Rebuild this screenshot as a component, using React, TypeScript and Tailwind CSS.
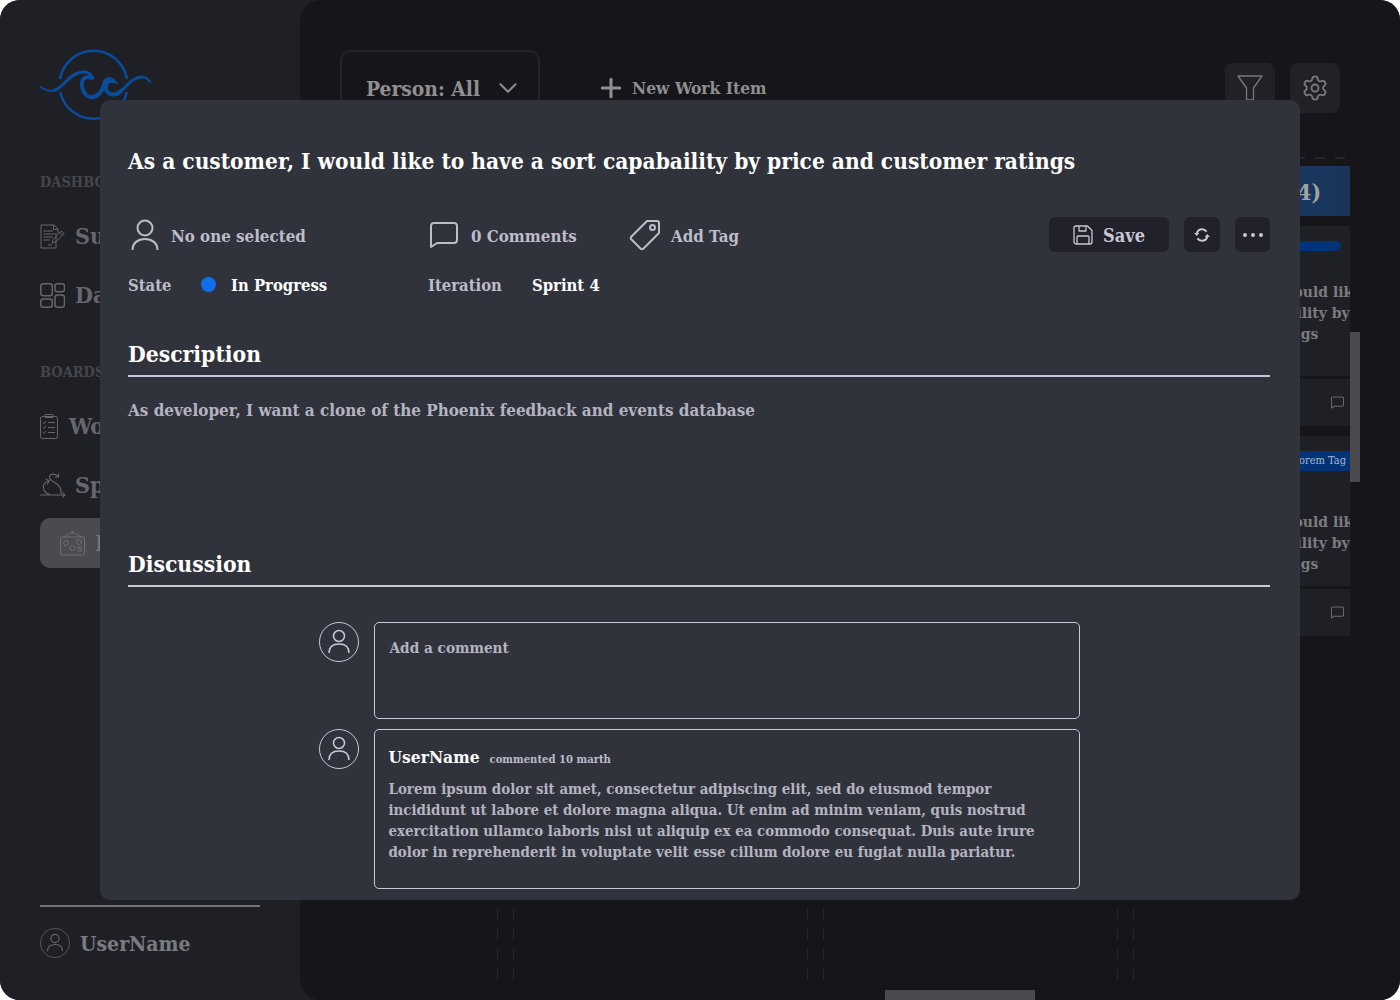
import { ChevronDown, Plus, Settings } from "lucide-react";

const dashV =
  "w-px h-full bg-[repeating-linear-gradient(to_bottom,#26272c_0_3px,transparent_3px_12px,#26272c_12px_20px)]";

function Logo() {
  return (
    <svg width="110" height="70" viewBox="0 0 110 70" fill="none" stroke="#0a4c9c" strokeLinecap="round" className="overflow-visible">
      <path d="M20.2 28 A34 34 0 0 1 86.8 28" strokeWidth="2.5" />
      <path d="M20.5 43 A34 34 0 0 0 86.5 43" strokeWidth="2.5" />
      <path d="M1 37 C5 40 10 42 15 40" strokeWidth="2" />
      <path d="M15 40 C24 37 30 22 44 22 C48 22 51 24 52 28" strokeWidth="3" />
      <path
        d="M52 28 C46 25 41 29 42 36 C43 44 48 48 53 47 C59 46 62 41 64 35 C65 30 69 27 73 31 C67 30 65 35 66 39 C68 46 76 46 81 41"
        strokeWidth="4"
      />
      <path d="M81 41 C87 36 93 27 102 27" strokeWidth="3" />
      <path d="M102 27 C105 27 108 29 110 32" strokeWidth="2" />
    </svg>
  );
}

function PersonIcon({ className }: { className?: string }) {
  return (
    <svg className={className} viewBox="0 0 28 32" fill="none" stroke="currentColor" strokeWidth="2">
      <circle cx="14" cy="9" r="7.5" />
      <path d="M1.5 31 C1.5 24 7 20 14 20 C21 20 26.5 24 26.5 31" />
    </svg>
  );
}

function Avatar({ className }: { className?: string }) {
  return (
    <svg className={className} viewBox="0 0 40 40" fill="none" stroke="currentColor" strokeWidth="1">
      <circle cx="20" cy="20" r="19.5" />
      <circle cx="20" cy="14" r="5.5" strokeWidth="1.5" />
      <path d="M10 31 C10 25 14 22 20 22 C26 22 30 25 30 31" strokeWidth="1.5" />
    </svg>
  );
}

function CommentIcon({ className, width = 2 }: { className?: string; width?: number }) {
  return (
    <svg className={className} viewBox="0 0 28 26" fill="none" stroke="currentColor" strokeWidth={width}>
      <path d="M4 1 H24 A3 3 0 0 1 27 4 V18 A3 3 0 0 1 24 21 H7 L1 25 V4 A3 3 0 0 1 4 1 Z" strokeLinejoin="round" />
    </svg>
  );
}

function TagIcon() {
  return (
    <svg width="32" height="32" viewBox="0 0 32 32" fill="none" stroke="currentColor" strokeWidth="2" strokeLinejoin="round">
      <path d="M18 2 H28 A2 2 0 0 1 30 4 V14 L14 30 A2 2 0 0 1 12 30 L2 20 A2 2 0 0 1 2 18 Z" />
      <circle cx="23.5" cy="8.5" r="2.5" />
    </svg>
  );
}

function SaveIcon() {
  return (
    <svg width="20" height="20" viewBox="0 0 20 20" fill="none" stroke="currentColor" strokeWidth="1.3" strokeLinejoin="round">
      <path d="M3 1 H14.5 L19 5.5 V17 A2 2 0 0 1 17 19 H3 A2 2 0 0 1 1 17 V3 A2 2 0 0 1 3 1 Z" />
      <path d="M6 1 V6 H13 V1" />
      <path d="M4 19 V12 A1 1 0 0 1 5 11 H15 A1 1 0 0 1 16 12 V19" />
    </svg>
  );
}

function SyncIcon() {
  return (
    <svg width="16" height="14" viewBox="0 0 16 14" fill="none" stroke="currentColor" strokeWidth="2">
      <path d="M2.7 6 C3.2 3 5.2 1.2 8 1.2 C10 1.2 11.6 2.2 12.6 3.6" />
      <path d="M13.3 8 C12.8 11 10.8 12.8 8 12.8 C6 12.8 4.4 11.8 3.4 10.4" />
      <path d="M0.2 5 L2.7 8 L5.2 5 Z" fill="currentColor" stroke="none" />
      <path d="M15.8 9 L13.3 6 L10.8 9 Z" fill="currentColor" stroke="none" />
    </svg>
  );
}

function DocIcon() {
  return (
    <svg width="25" height="25" viewBox="0 0 25 25" fill="none" stroke="currentColor" strokeWidth="1">
      <path d="M16 9 V24 H1 V1 H14 L18 5 V9" strokeLinejoin="round" />
      <path d="M13.5 1 V5.5 H18" />
      <path d="M3.5 7 H13 M3.5 10 H15 M3.5 13 H13 M3.5 16 H10 M8 21 H12" strokeWidth="1.2" />
      <path d="M12 19 L13 15.5 L21.5 7 L24 9.5 L15.5 18 Z" strokeLinejoin="round" />
      <path d="M20 8.5 L22.5 11" />
    </svg>
  );
}

function GridIcon() {
  return (
    <svg width="25" height="25" viewBox="0 0 25 25" fill="none" stroke="currentColor" strokeWidth="1.5">
      <rect x="0.8" y="0.8" width="11.5" height="12" rx="2.5" />
      <rect x="15" y="0.8" width="9.5" height="8" rx="2.5" />
      <rect x="0.8" y="16" width="11.5" height="8.2" rx="2.5" />
      <rect x="15" y="12" width="9.5" height="12.2" rx="2.5" />
    </svg>
  );
}

function ClipboardIcon() {
  return (
    <svg width="18" height="25" viewBox="0 0 18 25" fill="none" stroke="currentColor" strokeWidth="1">
      <rect x="0.5" y="2.5" width="17" height="22" rx="2" />
      <rect x="4.5" y="0.5" width="9" height="3" rx="1" />
      <path d="M3 8.5 L4 9.5 L6 7 M3 13.5 L4 14.5 L6 12 M3 18.5 L4 19.5 L6 17" />
      <path d="M8 8.5 H15 M8 13.5 H15 M8 18.5 H15" strokeWidth="1.2" />
    </svg>
  );
}

function SprintIcon() {
  return (
    <svg width="25" height="25" viewBox="0 0 25 25" fill="none" stroke="currentColor" strokeWidth="1.1" className="overflow-visible">
      <path d="M0 22 H25 M22.7 19.7 L25 22 L22.7 24.3" />
      <path d="M18 3.5 C16 0.5 10 0 9.5 4 C9 7.5 14 8.5 17 11 C20 13.5 21.5 17 21 21" />
      <path d="M9 8 C5 9 2 12 3.5 16 C4.5 19 7 21 10 21.5" />
      <path d="M18.5 0.5 V4 H15" />
      <path d="M5.5 6 L9.3 8 L7 11.5" />
    </svg>
  );
}

function RemoteIcon() {
  return (
    <svg width="25" height="25" viewBox="0 0 25 25" fill="none" stroke="currentColor" strokeWidth="0.8">
      <rect x="0.5" y="6" width="24" height="18" rx="2" />
      <path d="M4 6 L12.5 1 L21 6" />
      <circle cx="12.5" cy="1.5" r="1" />
      <circle cx="6" cy="12" r="2.5" />
      <circle cx="19" cy="11" r="2.5" />
      <circle cx="12.5" cy="17" r="2.5" />
      <path d="M17 16 H22 M17 18 H22 M17 20 H22" />
    </svg>
  );
}

function ColumnGap() {
  return (
    <div className="flex h-full w-[17px] shrink-0 justify-between">
      <div className={dashV} />
      <div className={dashV} />
    </div>
  );
}

function TaskCard({ withTag }: { withTag?: boolean }) {
  return (
    <div className="w-full shrink-0 overflow-hidden bg-[#1f2025]">
      <div className="h-[150px] pt-[15px]">
        {withTag ? (
          <div className="flex h-5 justify-end">
            <span className="flex w-[110px] items-center justify-end bg-[#003378] pt-px pr-1 text-[11px] whitespace-nowrap text-[#aab6ca]">
              Lorem Tag
            </span>
          </div>
        ) : (
          <div className="mx-[9px] h-2.5 rounded-full bg-[#003378]" />
        )}
        <div
          className={`text-[15.5px] leading-[21px] font-bold whitespace-nowrap text-[#7b7b80] ${withTag ? "mt-[40px]" : "mt-[30px]"}`}
        >
          <div className="ml-[17px]">As a customer, I would like</div>
          <div className="-ml-[4px]">to have a sort capabaility by</div>
          <div className="-ml-[28px]">price and customer ratings</div>
        </div>
      </div>
      <div className="h-[3px] bg-[#16161a]" />
      <div className="flex h-[47px] items-center justify-end pr-[6px] text-[#6a6b70]">
        <CommentIcon className="h-[13px] w-[13px]" width={2.2} />
      </div>
    </div>
  );
}

function Sidebar() {
  const navText = "text-[23px] font-bold text-[#66676d]";
  const label = "text-[14.5px] leading-6 font-bold text-[#45464b]";
  return (
    <aside className="flex h-full w-[300px] shrink-0 flex-col bg-[#1f2025] px-10 text-[#66676d]">
      <div className="mt-[50px] h-[70px]">
        <Logo />
      </div>
      <div className={`mt-[50px] ${label}`}>DASHBOARD</div>
      <div className="mt-[27px] flex h-[30px] items-center gap-2.5">
        <DocIcon />
        <span className={navText}>Summary</span>
      </div>
      <div className="mt-[29px] flex h-[30px] items-center gap-2.5">
        <GridIcon />
        <span className={navText}>Dashboard</span>
      </div>
      <div className={`mt-[50px] ${label}`}>BOARDS</div>
      <div className="mt-[27px] flex h-[30px] items-center gap-[11px]">
        <ClipboardIcon />
        <span className={navText}>Work Items</span>
      </div>
      <div className="mt-[29px] flex h-[30px] items-center gap-2.5">
        <SprintIcon />
        <span className={navText}>Sprints</span>
      </div>
      <div className="mt-[18px] flex h-[50px] items-center gap-2.5 rounded-[10px] bg-[#4a4b50] pl-5 text-[#76777c]">
        <RemoteIcon />
        <span className="text-[23px] font-bold">Integrations</span>
      </div>
      <div className="mt-auto mb-[42px]">
        <div className="h-0.5 bg-[#727379]" />
        <div className="mt-[21px] flex items-center gap-2.5 text-[#7a7b82]">
          <Avatar className="h-[30px] w-[30px] text-[#66676e]" />
          <span className="pt-[2px] text-[21px] leading-[28px] font-bold">UserName</span>
        </div>
      </div>
    </aside>
  );
}

function Board() {
  return (
    <main className="relative flex h-full flex-1 flex-col rounded-l-[20px] bg-[#16161a]">
      <div className="mt-[50px] flex h-[76px] items-center pr-[60px] pl-10">
        <div className="flex h-[76px] w-[200px] items-center justify-between rounded-[10px] border-2 border-[#232429] pr-[15px] pl-6 text-[#8f8f8f]">
          <span className="pt-[2px] text-[20.8px] font-bold">Person: All</span>
          <ChevronDown size={30} strokeWidth={1.6} />
        </div>
        <div className="ml-[56px] flex items-center gap-[6px] text-[#8f8f8f]">
          <Plus size={30} strokeWidth={2.4} />
          <span className="pt-[2px] text-[17.3px] font-bold">New Work Item</span>
        </div>
        <div className="ml-auto flex items-center gap-[15px] text-[#77777c]">
          <div className="flex h-[50px] w-[50px] items-center justify-center rounded-lg bg-[#212227]">
            <svg width="26" height="26" viewBox="0 0 26 26" fill="none" stroke="currentColor" strokeWidth="1.3" strokeLinejoin="round">
              <path d="M1 1 H25 L16.5 13 V25 H9.5 V13 Z" />
            </svg>
          </div>
          <div className="flex h-[50px] w-[50px] items-center justify-center rounded-lg bg-[#212227]">
            <Settings size={28} strokeWidth={1.6} />
          </div>
        </div>
      </div>

      <div className="mt-[31px] mb-2.5 ml-10 flex min-h-0 w-[1010px] flex-1 overflow-hidden">
        <div className="w-[157px] shrink-0" />
        <ColumnGap />
        <div className="w-[293px] shrink-0" />
        <ColumnGap />
        <div className="w-[293px] shrink-0" />
        <ColumnGap />
        <div className="flex w-[216px] shrink-0 flex-col">
          <div className="mr-[5px] h-0.5 shrink-0 bg-[repeating-linear-gradient(to_right,transparent_0_1px,#26272c_1px_11px,transparent_11px_20px)]" />
          <div className="mt-[7px] flex h-[50px] shrink-0 items-center justify-end bg-linear-to-r from-[#0e3e7a] to-[#1a3558] pt-[3px] pr-[29px] text-[22.5px] font-bold whitespace-nowrap text-[#a3a3a3]">
            In Progress (4)
          </div>
          <div className="mt-2.5 flex flex-col gap-2.5">
            <TaskCard />
            <TaskCard withTag />
          </div>
        </div>
      </div>

      {/* scroll thumbs */}
      <div className="absolute top-[332px] left-[1050px] h-[150px] w-2.5 bg-[#4a4a4e]" />
      <div className="absolute bottom-0 left-[585px] h-2.5 w-[150px] bg-[#4a4a4e]" />
    </main>
  );
}

function WorkItemModal() {
  const soft = "text-[16.8px] font-bold text-[#bdbdc9]";
  const actionBtn = "flex h-[35px] items-center justify-center rounded-md bg-[#20212a] text-[#c8c8d4]";
  return (
    <div className="absolute top-[100px] left-[100px] h-[800px] w-[1200px] overflow-hidden rounded-[10px] bg-[#30323c] pt-[45px] pr-[30px] pl-[28px]">
      <h1 className="text-[22.5px] leading-8 font-bold whitespace-nowrap text-white">
        As a customer, I would like to have a sort capabaility by price and customer ratings
      </h1>

      <div className="mt-10 flex h-[35px] items-center">
        <div className={`flex w-[300px] items-center gap-3 pl-[3px] ${soft}`}>
          <PersonIcon className="h-8 w-7" />
          <span className="pt-1">No one selected</span>
        </div>
        <div className={`flex w-[200px] items-center gap-[13px] pl-[2px] ${soft}`}>
          <CommentIcon className="h-[26px] w-7" />
          <span className="pt-1">0 Comments</span>
        </div>
        <div className={`flex items-center gap-[10px] pl-px ${soft}`}>
          <TagIcon />
          <span className="pt-1">Add Tag</span>
        </div>
        <div className="ml-auto flex gap-[15px]">
          <div className={`${actionBtn} w-[120px] gap-[10px]`}>
            <SaveIcon />
            <span className="pt-[2px] text-[18px] font-bold">Save</span>
          </div>
          <div className={`${actionBtn} w-9`}>
            <SyncIcon />
          </div>
          <div className={`${actionBtn} w-[35px] gap-1`}>
            <span className="h-1 w-1 rounded-full bg-current" />
            <span className="h-1 w-1 rounded-full bg-current" />
            <span className="h-1 w-1 rounded-full bg-current" />
          </div>
        </div>
      </div>

      <div className="mt-[21px] flex h-6 items-center text-[16.5px] font-bold">
        <div className="flex w-[300px] items-center">
          <span className="w-[73px] pt-[2px] text-[#bdbdc9]">State</span>
          <span className="-mt-[2px] h-[15px] w-[15px] rounded-full bg-[#0f6fec]" />
          <span className="ml-[15px] pt-[2px] text-white">In Progress</span>
        </div>
        <span className="w-[104px] pt-[2px] text-[#bdbdc9]">Iteration</span>
        <span className="pt-[2px] text-white">Sprint 4</span>
      </div>

      <h2 className="mt-[41px] border-b-2 border-[#c8c8d8] pb-[5px] text-[22.7px] leading-8 font-bold text-white">Description</h2>
      <p className="mt-[21px] h-[150px] text-[16.92px] leading-6 font-bold text-[#b4b4c0]">
        As developer, I want a clone of the Phoenix feedback and events database
      </p>
      <h2 className="border-b-2 border-[#c8c8d8] pb-[5px] text-[22.7px] leading-8 font-bold text-white">Discussion</h2>

      <div className="mx-auto mt-[35px] flex w-[761px] flex-col gap-2.5">
        <div className="flex gap-[15px]">
          <Avatar className="h-10 w-10 shrink-0 text-[#c8c8d8]" />
          <div className="h-[97px] flex-1 rounded-[5px] border border-[#c8c8d8] pt-[15px] pr-[14px] pl-[15px] text-[15.2px] leading-5 font-bold text-[#b4b4c0]">
            Add a comment
          </div>
        </div>
        <div className="flex gap-[15px]">
          <Avatar className="h-10 w-10 shrink-0 text-[#c8c8d8]" />
          <div className="h-[160px] flex-1 rounded-[5px] border border-[#c8c8d8] pt-[15px] pr-[14px] pl-[14px]">
            <div className="flex items-baseline gap-2.5">
              <span className="text-[17.3px] leading-6 font-bold text-white">UserName</span>
              <span className="text-[11.2px] font-bold text-[#bdbdc9]">commented 10 marth</span>
            </div>
            <p className="mt-2.5 text-[14.9px] leading-[21px] font-bold text-[#b4b4c0]">
              Lorem ipsum dolor sit amet, consectetur adipiscing elit, sed do eiusmod tempor incididunt ut labore et
              dolore magna aliqua. Ut enim ad minim veniam, quis nostrud exercitation ullamco laboris nisi ut aliquip ex
              ea commodo consequat. Duis aute irure dolor in reprehenderit in voluptate velit esse cillum dolore eu fugiat
              nulla pariatur.
            </p>
          </div>
        </div>
      </div>
    </div>
  );
}

export default function App() {
  return (
    <div className="bg-white">
      <div className="relative flex h-[1000px] w-[1400px] overflow-hidden rounded-[20px] bg-[#1f2025] font-['DejaVu_Serif_Condensed','DejaVu_Serif',serif]">
        <Sidebar />
        <Board />
        <WorkItemModal />
      </div>
    </div>
  );
}
